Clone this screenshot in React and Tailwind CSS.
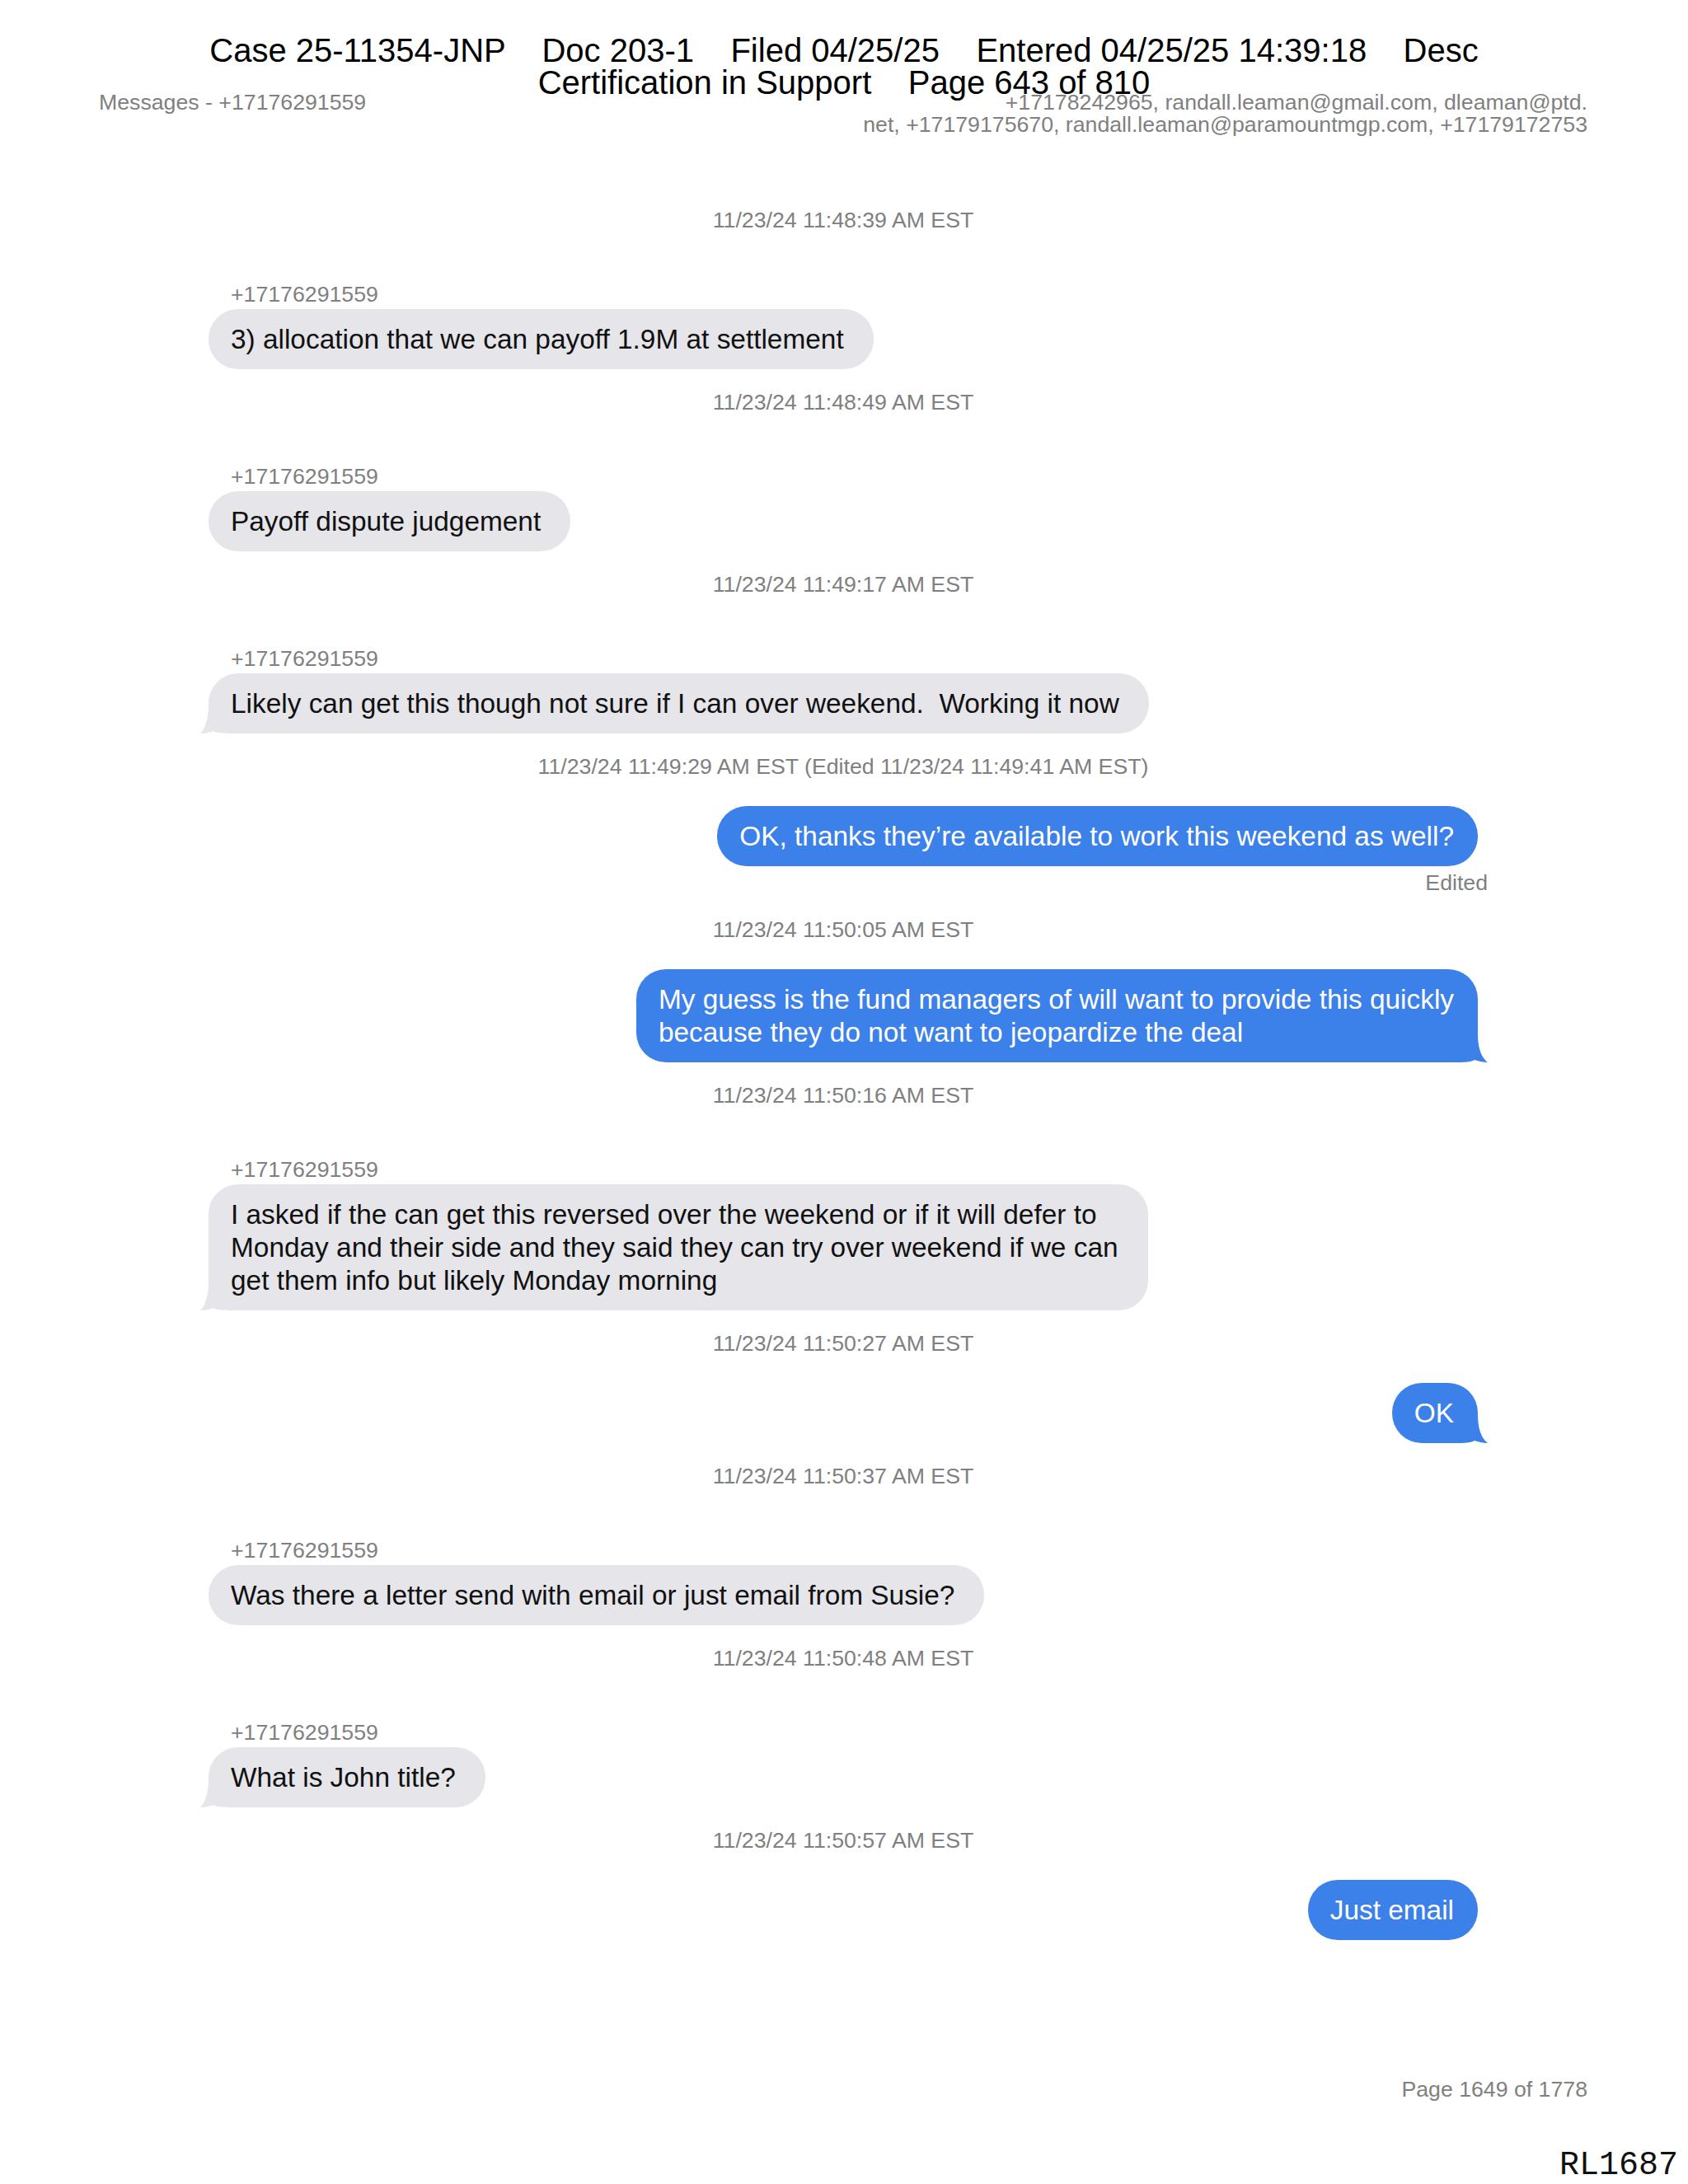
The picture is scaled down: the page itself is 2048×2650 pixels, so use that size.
import React from "react";

const sans = { fontFamily: '"Liberation Sans", Arial, sans-serif' };

const messages = [
  { ts: "11/23/24 11:48:39 AM EST", from: "them", text: "3) allocation that we can payoff 1.9M at settlement" },
  { ts: "11/23/24 11:48:49 AM EST", from: "them", text: "Payoff dispute judgement" },
  { ts: "11/23/24 11:49:17 AM EST", from: "them", text: "Likely can get this though not sure if I can over weekend.  Working it now", tail: true },
  { ts: "11/23/24 11:49:29 AM EST (Edited 11/23/24 11:49:41 AM EST)", from: "me", text: "OK, thanks they\u2019re available to work this weekend as well?", edited: true },
  { ts: "11/23/24 11:50:05 AM EST", from: "me", text: "My guess is the fund managers of will want to provide this quickly\nbecause they do not want to jeopardize the deal", tail: true },
  { ts: "11/23/24 11:50:16 AM EST", from: "them", text: "I asked if the can get this reversed over the weekend or if it will defer to\nMonday and their side and they said they can try over weekend if we can\nget them info but likely Monday morning", tail: true },
  { ts: "11/23/24 11:50:27 AM EST", from: "me", text: "OK", tail: true },
  { ts: "11/23/24 11:50:37 AM EST", from: "them", text: "Was there a letter send with email or just email from Susie?" },
  { ts: "11/23/24 11:50:48 AM EST", from: "them", text: "What is John title?", tail: true },
  { ts: "11/23/24 11:50:57 AM EST", from: "me", text: "Just email" },
];

const SENDER = "+17176291559";

function GrayTail() {
  return (
    <svg className="absolute left-[-10px] bottom-0 w-[48px] h-[34px]" viewBox="0 0 48 34">
      <path d="M10 0 C10 16 6 28 0 34 C6 34 12 32.5 16 31 C20 33.5 26 34 48 34 L48 0 Z" fill="#e5e5ea" />
    </svg>
  );
}

function BlueTail() {
  return (
    <svg className="absolute right-[-12px] bottom-0 w-[48px] h-[34px]" viewBox="0 0 48 34">
      <path d="M36 0 C36 16 40 28 48 34 C42 34 36 32.5 32 31 C28 33.5 22 34 0 34 L0 0 Z" fill="#3c80ea" />
    </svg>
  );
}

function Timestamp({ children, first }) {
  return (
    <div
      className={`${first ? "" : "mt-[25px]"} h-[30px] leading-[30px] text-center text-[26.7px] text-[#808080] whitespace-pre`}
    >
      {children}
    </div>
  );
}

function Message({ m }) {
  if (m.from === "them") {
    return (
      <div className="mt-[60px] flex flex-col items-start">
        <div className="pl-[27px] leading-[30px] text-[26.7px] text-[#808080]">{SENDER}</div>
        <div className="relative mt-[3px] rounded-[36px] bg-[#e5e5ea] pl-[27px] pr-[36px] py-[16.5px] text-[33.4px] leading-[40px] text-[#111] whitespace-pre">
          {m.tail && <GrayTail />}
          <span className="relative">{m.text}</span>
        </div>
      </div>
    );
  }
  return (
    <div className="mt-[33px] flex flex-col items-end">
      <div className="relative rounded-[36px] bg-[#3c80ea] pl-[27px] pr-[29px] py-[16.5px] text-[33.4px] leading-[40px] text-white whitespace-pre">
        {m.tail && <BlueTail />}
        <span className="relative">{m.text}</span>
      </div>
      {m.edited && (
        <div className="mt-[5px] mb-[2px] mr-[-12px] leading-[30px] text-[26.7px] text-[#808080]">Edited</div>
      )}
    </div>
  );
}

export default function App() {
  return (
    <div className="relative min-h-[2650px] w-full bg-white overflow-hidden" style={sans}>
      {/* page header */}
      <div className="flex justify-between pl-[120px] pr-[122px] pt-[111px] text-[26.7px] leading-[27px] text-[#808080]">
        <div>Messages - {SENDER}</div>
        <div className="text-right">
          +17178242965, randall.leaman@gmail.com, dleaman@ptd.
          <br />
          net, +17179175670, randall.leaman@paramountmgp.com, +17179172753
        </div>
      </div>

      {/* conversation */}
      <div className="flex flex-col pl-[253px] pr-[255px] pt-[87px]">
        {messages.map((m, i) => (
          <React.Fragment key={i}>
            <Timestamp first={i === 0}>{m.ts}</Timestamp>
            <Message m={m} />
          </React.Fragment>
        ))}
      </div>

      {/* page footer */}
      <div className="mt-[166px] pr-[122px] text-right text-[26.7px] leading-[30px] text-[#808080]">
        Page 1649 of 1778
      </div>

      {/* court filing stamp */}
      <div className="absolute inset-x-0 top-[42px] text-center text-[40px] leading-[39px] text-black whitespace-pre">
        {"Case 25-11354-JNP    Doc 203-1    Filed 04/25/25    Entered 04/25/25 14:39:18    Desc"}
        <br />
        {"Certification in Support    Page 643 of 810"}
      </div>

      {/* bates number */}
      <div
        className="absolute right-[12px] top-[2608px] text-[40px] leading-[40px] text-[#111]"
        style={{ fontFamily: '"Courier New", "Liberation Mono", monospace' }}
      >
        RL1687
      </div>
    </div>
  );
}
